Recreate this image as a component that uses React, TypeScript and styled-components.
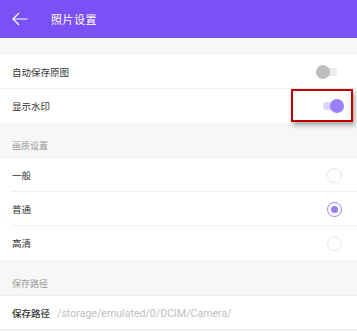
import React from "react";
import styled, { createGlobalStyle } from "styled-components";

const Global = createGlobalStyle`
  html, body { margin: 0; padding: 0; background: #f7f7f7; }
  body { font-family: Roboto, "Noto Sans CJK SC", sans-serif; -webkit-font-smoothing: antialiased; }
  * { box-sizing: border-box; }
`;

const Page = styled.div`
  position: relative;
  width: 357px;
  height: 331px;
  overflow: hidden;
  background: #f7f7f7;
`;

const Header = styled.div`
  height: 38px;
  background: #7b51f5;
  display: flex;
  align-items: center;
  padding-left: 12px;
`;

const BackBtn = styled.div`
  width: 16px;
  height: 14px;
  display: flex;
  align-items: center;
`;

const Title = styled.div`
  margin-left: 23px;
  color: #fff;
  font-size: 11px;
  font-family: "Noto Sans CJK SC", sans-serif;
  letter-spacing: 0.5px;
`;

const Spacer = styled.div<{ $h: number }>`
  height: ${(p) => p.$h}px;
`;

const Row = styled.div<{ $inset?: boolean; $divider?: boolean }>`
  height: 34px;
  background: #fff;
  display: flex;
  align-items: center;
  padding-left: 12px;
  position: relative;
  &::after {
    content: "";
    display: ${(p) => (p.$divider ? "block" : "none")};
    position: absolute;
    left: ${(p) => (p.$inset ? "11px" : "0")};
    right: 0;
    bottom: 0;
    height: 1px;
    background: #efefef;
  }
`;

const Label = styled.div<{ $bold?: boolean }>`
  flex: 1;
  display: flex;
  align-items: center;
  color: #333;
  font-size: 9.5px;
  font-family: "Noto Sans CJK SC", sans-serif;
  font-weight: ${(p) => (p.$bold ? 500 : 400)};
`;

const PathText = styled.span`
  margin-left: 7px;
  color: #c0c0c0;
  font-size: 10.6px;
  font-weight: 400;
  font-family: Roboto, sans-serif;
`;

const SectionHeader = styled.div<{ $h: number; $pb: number }>`
  height: ${(p) => p.$h}px;
  display: flex;
  align-items: flex-end;
  padding: 0 0 ${(p) => p.$pb}px 12px;
  color: #9a9a9a;
  font-size: 9px;
  font-family: "Noto Sans CJK SC", sans-serif;
  border-bottom: 1px solid #eeeeee;
`;

const Switch = styled.div`
  position: relative;
  width: 28px;
  height: 14px;
  margin-right: 13px;
`;

const Track = styled.div<{ $on?: boolean }>`
  position: absolute;
  left: 7px;
  top: 3px;
  width: 14px;
  height: 8px;
  border-radius: 4px;
  background: ${(p) => (p.$on ? "#dcd3fd" : "#e9e9e9")};
`;

const Knob = styled.div<{ $on?: boolean }>`
  position: absolute;
  top: 0;
  left: ${(p) => (p.$on ? "14px" : "0")};
  width: 14px;
  height: 14px;
  border-radius: 50%;
  background: ${(p) => (p.$on ? "#9a7efc" : "#bdbdbd")};
`;

const Radio = styled.div<{ $checked?: boolean }>`
  width: 15px;
  height: 15px;
  margin-right: 15px;
  border-radius: 50%;
  border: 1.5px solid ${(p) => (p.$checked ? "#9a7efc" : "#e6e6e6")};
  display: flex;
  align-items: center;
  justify-content: center;
  &::after {
    content: "";
    display: ${(p) => (p.$checked ? "block" : "none")};
    width: 7px;
    height: 7px;
    border-radius: 50%;
    background: #9a7efc;
  }
`;

const Highlight = styled.div`
  position: absolute;
  left: 291px;
  top: 89px;
  width: 62px;
  height: 33px;
  border: 2px solid #c00000;
  box-shadow: 2px 3px 5px rgba(0, 0, 0, 0.35);
  pointer-events: none;
`;

const qualities = [
  { name: "一般", checked: false },
  { name: "普通", checked: true },
  { name: "高清", checked: false },
];

export default function App() {
  return (
    <Page>
      <Global />
      <Header>
        <BackBtn>
          <svg width="16" height="14" viewBox="0 0 16 14" fill="none">
            <path d="M15.5 7H1M7 1L1 7l6 6" stroke="#fff" strokeWidth="1.2" />
          </svg>
        </BackBtn>
        <Title>照片设置</Title>
      </Header>
      <Spacer $h={17} />
      <Row $divider>
        <Label>自动保存原图</Label>
        <Switch>
          <Track />
          <Knob />
        </Switch>
      </Row>
      <Row>
        <Label>显示水印</Label>
        <Switch>
          <Track $on />
          <Knob $on />
        </Switch>
      </Row>
      <SectionHeader $h={35} $pb={5}>画质设置</SectionHeader>
      {qualities.map((q, i) => (
        <Row key={q.name} $divider={i < qualities.length - 1} $inset>
          <Label>{q.name}</Label>
          <Radio $checked={q.checked} />
        </Row>
      ))}
      <SectionHeader $h={36} $pb={5}>保存路径</SectionHeader>
      <Row $divider>
        <Label $bold>
          保存路径<PathText>/storage/emulated/0/DCIM/Camera/</PathText>
        </Label>
      </Row>
      <Highlight />
    </Page>
  );
}
